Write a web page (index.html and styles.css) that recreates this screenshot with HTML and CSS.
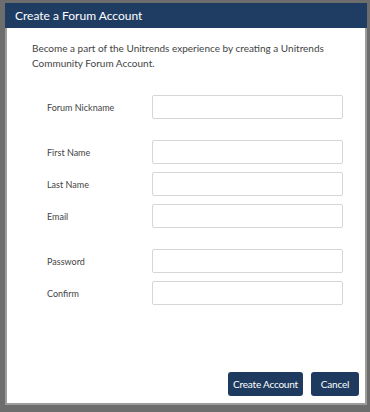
FILE: index.html
```html
<!DOCTYPE html>
<html>
<head>
<meta charset="utf-8">
<link rel="stylesheet" href="styles.css">
</head>
<body>
<div class="dialog">
  <div class="header">Create a Forum Account</div>
  <div class="body">
    <p class="intro">Become a part of the Unitrends experience by creating a Unitrends Community Forum Account.</p>
    <div class="group">
      <div class="row"><label class="label">Forum Nickname</label><input class="field" type="text"></div>
    </div>
    <div class="group">
      <div class="row"><label class="label">First Name</label><input class="field" type="text"></div>
      <div class="row"><label class="label">Last Name</label><input class="field" type="text"></div>
      <div class="row"><label class="label">Email</label><input class="field" type="text"></div>
    </div>
    <div class="group">
      <div class="row"><label class="label">Password</label><input class="field" type="password"></div>
      <div class="row"><label class="label">Confirm</label><input class="field" type="password"></div>
    </div>
  </div>
  <div class="footer">
    <button class="btn btn-create">Create Account</button>
    <button class="btn btn-cancel">Cancel</button>
  </div>
</div>
</body>
</html>
```
FILE: styles.css
```css
html, body {
  margin: 0;
  padding: 0;
  background: #6d6d6d;
  height: 100%;
}
body {
  font-family: Lato, "Open Sans", sans-serif;
  overflow: hidden;
}
.dialog {
  margin: 3px 0 0 5px;
  width: 358px;
  height: 400px;
  background: #fff;
  border: 2px solid #9c9c9c;
  border-top: none;
  display: flex;
  flex-direction: column;
}
.header {
  margin: 0 -2px;
  height: 25px;
  background: #1f3d63;
  color: #fff;
  font-size: 12px;
  line-height: 25px;
  padding-left: 10px;
}
.body {
  padding: 13px 22px 0 25px;
}
.intro {
  margin: 0;
  font-size: 10px;
  line-height: 15px;
  color: #444;
}
.group {
  display: flex;
  flex-direction: column;
  gap: 8px;
  margin-top: 21px;
}
.group:first-of-type {
  margin-top: 24px;
}
.row {
  display: flex;
  align-items: center;
  height: 24px;
}
.label {
  width: 120px;
  padding-left: 15px;
  box-sizing: border-box;
  font-size: 9px;
  color: #444;
}
.field {
  width: 191px;
  height: 24px;
  box-sizing: border-box;
  border: 1px solid #d6d6d6;
  border-radius: 2px;
  margin: 0;
  padding: 0 6px;
  background: #fff;
}
.footer {
  margin-top: auto;
  display: flex;
  justify-content: flex-end;
  gap: 8px;
  padding: 0 6px 7px 0;
}
.btn {
  height: 24px;
  border: none;
  border-radius: 3px;
  background: #1e3a5e;
  color: #fff;
  font-family: Lato, "Open Sans", sans-serif;
  font-size: 10px;
  letter-spacing: -0.2px;
  padding: 0;
}
.btn-create { width: 75px; }
.btn-cancel { width: 48px; }
```
